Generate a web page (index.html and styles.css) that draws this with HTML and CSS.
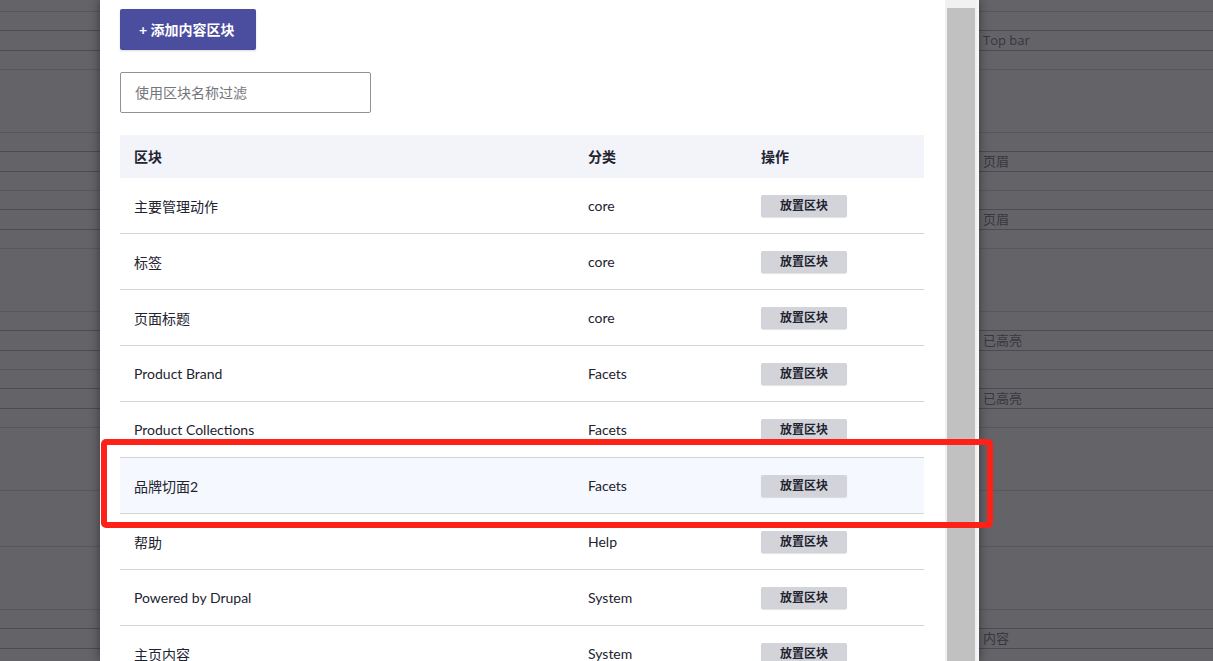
FILE: index.html
```html
<!DOCTYPE html>
<html lang="zh-CN">
<head>
    <meta charset="UTF-8">
    <meta name="viewport" content="width=device-width, initial-scale=1.0">
    <title>放置区块</title>
    <link rel="stylesheet" href="styles.css">
</head>
<body>
    <div class="page">
        <div class="strip top lt"></div>
        <div class="strip dk"></div>
        <div class="strip label dk">Top bar</div>
        <div class="strip lt"></div>
        <div class="strip gap lt"></div>
        <div class="strip dk"></div>
        <div class="strip label dk">页眉</div>
        <div class="strip lt"></div>
        <div class="strip dk"></div>
        <div class="strip label dk">页眉</div>
        <div class="strip lt"></div>
        <div class="strip gap lt"></div>
        <div class="strip dk"></div>
        <div class="strip label dk">已高亮</div>
        <div class="strip lt"></div>
        <div class="strip dk"></div>
        <div class="strip label dk">已高亮</div>
        <div class="strip lt"></div>
        <div class="strip gap lt"></div>
        <div class="strip mid lt"></div>
        <div class="strip gap lt"></div>
        <div class="strip dk"></div>
        <div class="strip label dk">内容</div>
    </div>

    <div class="dialog">
        <div class="dialog-content">
            <a class="button-primary" href="#">+ 添加内容区块</a>
            <input class="filter" type="search" placeholder="使用区块名称过滤">

            <table class="block-table">
                <thead>
                    <tr>
                        <th class="col-name">区块</th>
                        <th class="col-cat">分类</th>
                        <th class="col-op">操作</th>
                    </tr>
                </thead>
                <tbody>
                    <tr><td>主要管理动作</td><td>core</td><td><a class="button-small" href="#">放置区块</a></td></tr>
                    <tr><td>标签</td><td>core</td><td><a class="button-small" href="#">放置区块</a></td></tr>
                    <tr><td>页面标题</td><td>core</td><td><a class="button-small" href="#">放置区块</a></td></tr>
                    <tr><td>Product Brand</td><td>Facets</td><td><a class="button-small" href="#">放置区块</a></td></tr>
                    <tr><td>Product Collections</td><td>Facets</td><td><a class="button-small" href="#">放置区块</a></td></tr>
                    <tr class="is-selected"><td>品牌切面2</td><td>Facets</td><td><a class="button-small" href="#">放置区块</a></td></tr>
                    <tr><td>帮助</td><td>Help</td><td><a class="button-small" href="#">放置区块</a></td></tr>
                    <tr><td>Powered by Drupal</td><td>System</td><td><a class="button-small" href="#">放置区块</a></td></tr>
                    <tr><td>主页内容</td><td>System</td><td><a class="button-small" href="#">放置区块</a></td></tr>
                </tbody>
            </table>
        </div>
        <div class="scrollbar">
            <div class="thumb"></div>
        </div>
    </div>

    <div class="highlight-box"></div>
</body>
</html>
```

FILE: styles.css
```css
body {
    margin: 0;
    font-family: 'Lato', 'Noto Sans CJK SC', sans-serif;
    font-size: 14px;
    color: #222330;
    background-color: #646368;
    overflow: hidden;
}

/* background page, dimmed behind the dialog */
.page {
    height: 661px;
    overflow: hidden;
}
.strip {
    height: 18px;
    box-sizing: content-box;
}
.strip.top {
    height: 11px;
}
.strip.gap {
    height: 62px;
}
.strip.mid {
    height: 55px;
}
.strip.label {
    padding-left: 983px;
    line-height: 19px;
    height: 19px;
    color: #38373d;
    font-size: 13px;
    font-family: 'Open Sans', 'Noto Sans CJK SC', sans-serif;
}
.lt {
    border-bottom: 1px solid #58575c;
}
.dk {
    border-bottom: 1px solid #4c4b50;
}

/* dialog */
.dialog {
    position: absolute;
    top: 0;
    left: 100px;
    width: 879px;
    height: 661px;
    display: flex;
    background-color: #fff;
    box-shadow: 0 0 10px rgba(0, 0, 0, 0.45);
}
.dialog-content {
    flex: 1;
    padding: 9px 21px 0 20px;
    overflow: hidden;
}
.scrollbar {
    width: 34px;
    background-color: #f1f1f1;
    padding: 8px 2px 0 2px;
    box-sizing: border-box;
    border-right: 2px solid #f7f7f7;
}
.thumb {
    height: 100%;
    background-color: #c1c1c1;
}

.button-primary {
    display: inline-block;
    height: 41px;
    line-height: 41px;
    padding: 0 21px 0 19px;
    background-color: #4b4d9e;
    color: #fff;
    font-weight: bold;
    text-decoration: none;
    border-radius: 2px;
    box-shadow: 0 1px 2px rgba(0, 0, 0, 0.15);
}

.filter {
    display: block;
    box-sizing: border-box;
    width: 251px;
    height: 41px;
    margin: 22px 0 22px;
    padding: 0 14px;
    border: 1px solid #919297;
    border-radius: 2px;
    font-family: inherit;
    font-size: 14px;
    color: #222330;
    outline: none;
}
.filter::placeholder {
    color: #75767b;
}

.block-table {
    width: 804px;
    border-collapse: collapse;
}
.block-table th {
    height: 41px;
    padding: 0 14px 2px;
    text-align: left;
    background-color: #f3f4f9;
    font-weight: bold;
}
.col-name {
    width: 426px;
}
.col-cat {
    width: 145px;
}
.block-table td {
    height: 55px;
    padding: 0 14px;
    border-bottom: 1px solid #d4d4d8;
}
.block-table tr.is-selected td {
    background-color: #f5f8fe;
}

.button-small {
    display: inline-block;
    width: 86px;
    height: 22px;
    line-height: 22px;
    text-align: center;
    font-size: 12px;
    font-weight: 600;
    color: #222330;
    text-decoration: none;
    background-color: #d3d4d9;
    border-radius: 2px;
    box-shadow: 0 1px 1px rgba(0, 0, 0, 0.12);
}

/* red annotation frame */
.highlight-box {
    position: absolute;
    left: 101px;
    top: 439px;
    width: 880px;
    height: 77px;
    border: 6px solid #fe2117;
    border-radius: 5px;
}
```
